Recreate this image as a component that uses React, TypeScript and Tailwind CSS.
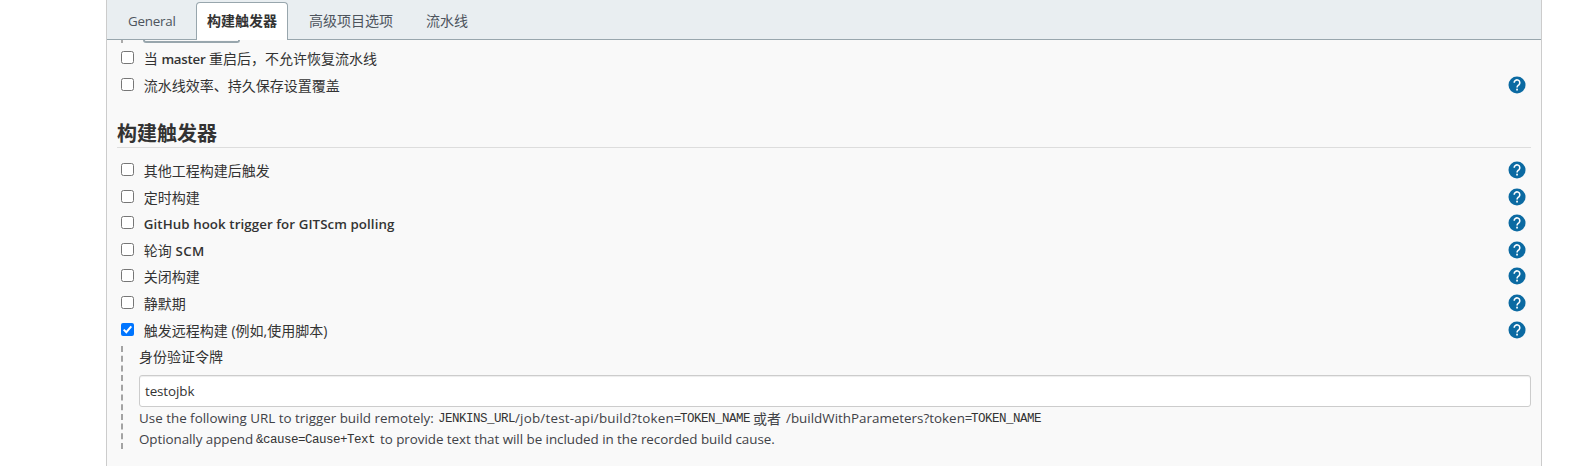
import { ReactNode } from "react";

function HelpIcon() {
  return (
    <svg className="h-[18px] w-[18px] shrink-0" viewBox="0 0 18 18">
      <circle cx="9" cy="9" r="8.5" fill="#0b6aa2" />
      <path d="M6.2 6.7a2.8 2.8 0 1 1 4.6 2.1C9.8 9.6 9.05 9.9 9.05 11.5" fill="none" stroke="#fff" strokeWidth="1.6" />
      <rect x="8.2" y="12.7" width="1.7" height="1.8" fill="#fff" />
    </svg>
  );
}

function CheckBox({ checked = false }: { checked?: boolean }) {
  return checked ? (
    <span className="mt-[7px] h-[13px] w-[13px] shrink-0 rounded-[2px] bg-[#0075ff]">
      <svg className="h-[13px] w-[13px]" viewBox="0 0 13 13">
        <path d="M2.7 6.6 5.3 9.2 10.3 3.4" fill="none" stroke="#fff" strokeWidth="2" />
      </svg>
    </span>
  ) : (
    <span className="mt-[7px] h-[13px] w-[13px] shrink-0 rounded-[2.5px] border border-[#767676] bg-white" />
  );
}

function Row({ height = "h-[27px]", checked, help = true, children }: { height?: string; checked?: boolean; help?: boolean; children: ReactNode }) {
  return (
    <div className={`flex items-start pl-[14px] pr-[15px] ${height}`}>
      <CheckBox checked={checked} />
      <span className="ml-[9.8px] mt-[5px] grow text-[14px] leading-5">{children}</span>
      {help && <span className="mt-[5px]"><HelpIcon /></span>}
    </div>
  );
}

function Latin({ tracking = "tracking-[0.08px]", children }: { tracking?: string; children: ReactNode }) {
  return <span className={`text-[13.3px] font-semibold ${tracking}`}>{children}</span>;
}

function Mono({ width, children }: { width: string; children: ReactNode }) {
  return <span className={`shrink-0 pt-px font-['Liberation_Mono',monospace] text-[12.5px] tracking-[-0.5px] text-[#333] ${width}`}>{children}</span>;
}

function Seg({ width, children }: { width: string; children: ReactNode }) {
  return <span className={`shrink-0 ${width}`}>{children}</span>;
}

export default function App() {
  return (
    <div className="h-[466px] overflow-hidden bg-white pl-[106px] font-['Open_Sans','Noto_Sans_CJK_SC',sans-serif] text-[#333]">
      <div className="h-full w-[1436px] border-x border-[#ccc] bg-[#f9f9f9]">
        <nav className="flex h-10 items-end border-b border-[#98a6ad] bg-[#e9eef1] text-[14px] text-[#4d545d]">
          <div className="flex h-[36px] w-[89px] items-center pl-[21px] text-[13.4px] tracking-[-0.25px]">General</div>
          <div className="-mb-px flex h-[38px] w-[92px] items-center justify-center rounded-t-[4px] border border-b-0 border-[#98a6ad] bg-white pb-[3px] font-bold text-[#333]">构建触发器</div>
          <div className="flex h-[37px] w-[116px] items-center pl-[21px]">高级项目选项</div>
          <div className="flex h-[37px] items-center pl-[22px]">流水线</div>
        </nav>
        <div className="flex h-1 items-start pl-[14px]">
          <div className="h-[3px] w-[2px] bg-[#aaa]" />
          <div className="ml-5 h-[3px] w-[97px] rounded-b-[4px] border-2 border-t-0 border-[#98a6ad]" />
        </div>
        <Row help={false}>当 <Latin tracking="tracking-[-0.25px]">master</Latin> 重启后，不允许恢复流水线</Row>
        <Row>流水线效率、持久保存设置覆盖</Row>
        <h2 className="mx-[10px] mt-[22px] h-7 border-b border-[#ddd] text-[20px] font-bold leading-[28px]">构建触发器</h2>
        <div className="pt-2">
          <Row>其他工程构建后触发</Row>
          <Row height="h-[26px]">定时构建</Row>
          <Row><Latin>GitHub hook trigger for GITScm polling</Latin></Row>
          <Row height="h-[26px]">轮询 <Latin tracking="tracking-[0.4px]">SCM</Latin></Row>
          <Row>关闭构建</Row>
          <Row>静默期</Row>
          <Row checked>触发远程构建 (例如,使用脚本)</Row>
        </div>
        <div className="ml-[14px] mr-[10px] mt-[3px] h-[103px] border-l-2 border-dashed border-[#a3a3a3] pl-4">
          <div className="h-[29px] text-[14px] leading-[22px]">身份验证令牌</div>
          <div className="flex h-8 items-center rounded-[3px] border border-[#ccc] bg-white pl-[5px] text-[13.4px] tracking-[-0.1px] shadow-[inset_0_1px_1px_rgba(0,0,0,0.075)]">testojbk</div>
          <div className="whitespace-nowrap text-[13.4px] leading-[21px] text-[#3f4247]">
            <div className="mt-px flex h-[21px]">
              <Seg width="w-[299px]">Use the following URL to trigger build remotely:</Seg>
              <Mono width="w-[77px]">JENKINS_URL</Mono>
              <Seg width="w-[165px] tracking-[0.2px]">/job/test-api/build?token=</Seg>
              <Mono width="w-[73px]">TOKEN_NAME</Mono>
              <Seg width="w-[33px] text-[14px]">或者</Seg>
              <Seg width="w-[185px]">/buildWithParameters?token=</Seg>
              <Mono width="w-[70px]">TOKEN_NAME</Mono>
            </div>
            <div className="flex h-[21px]">
              <Seg width="w-[117px] tracking-[-0.06px]">Optionally append</Seg>
              <Mono width="w-[124px]">&amp;cause=Cause+Text</Mono>
              <Seg width="w-[394px] tracking-[-0.04px]">to provide text that will be included in the recorded build cause.</Seg>
            </div>
          </div>
        </div>
      </div>
    </div>
  );
}
